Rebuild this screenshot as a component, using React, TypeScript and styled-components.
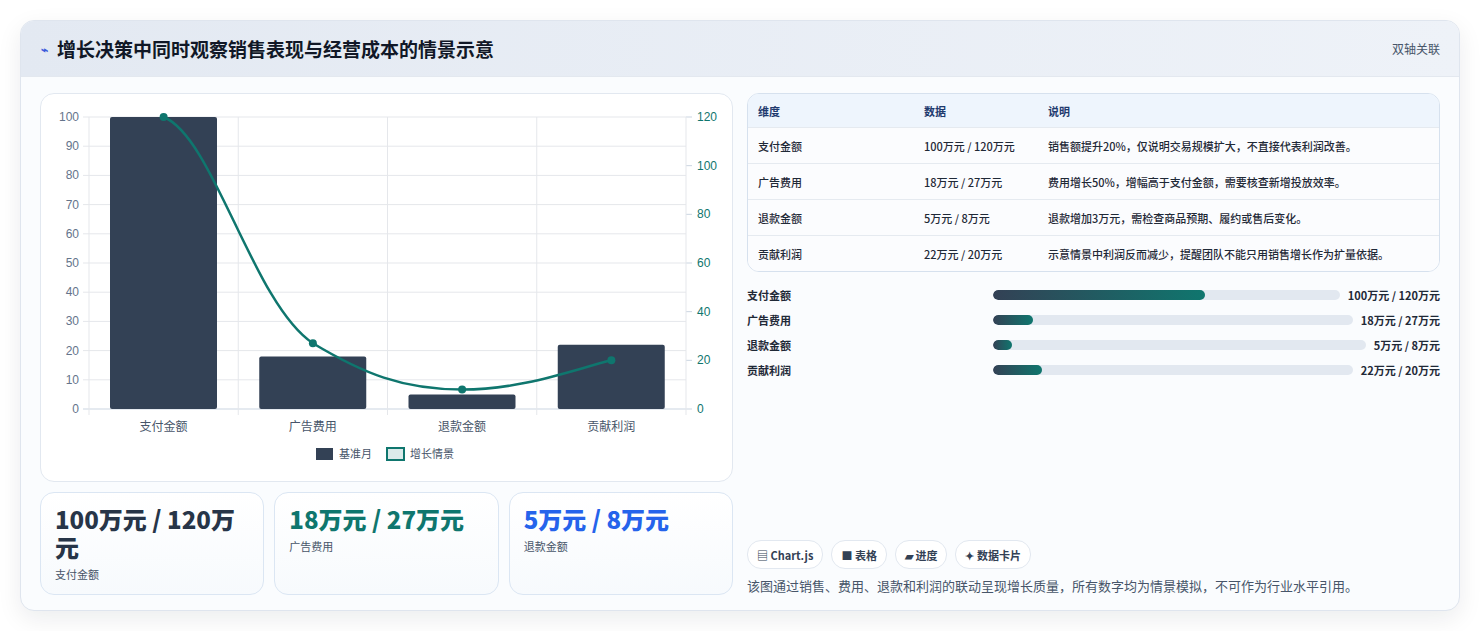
import React from "react";
import styled, { createGlobalStyle } from "styled-components";

const Global = createGlobalStyle`
  body { margin: 0; background: #ffffff; font-family: "Noto Sans CJK SC", "Noto Sans", sans-serif; }
`;
const Page = styled.div`padding: 20px 20px 20px 20px; width: 1480px; box-sizing: border-box;`;
const Card = styled.div`
  width: 1440px; height: 591px; box-sizing: border-box; border: 1px solid #dfe5ee; border-radius: 14px;
  background: #fafcfe; box-shadow: 0 8px 24px rgba(15,23,42,0.08); overflow: hidden; display: flex; flex-direction: column;
`;
const Header = styled.div`
  height: 55px; flex: none; display: flex; align-items: center; justify-content: space-between; padding: 0 19px 0 20px;
  background: linear-gradient(90deg, #e3e9f2, #eef2f8); border-bottom: 1px solid #e3e8ef;
`;
const Title = styled.h1`margin: 0; font-size: 19px; font-weight: 700; color: #111827; display: flex; align-items: center; gap: 9px;`;
const Tag = styled.span`font-size: 12px; color: #475569;`;
const Body = styled.div`flex: 1; display: grid; grid-template-columns: 693px 693px; gap: 14px; padding: 16px 19px 18px 19px;`;
const Col = styled.div`display: flex; flex-direction: column; gap: 10px; min-height: 0;`;
const ChartBox = styled.div`height: 389px; box-sizing: border-box; border: 1px solid #e2e8f0; border-radius: 14px; background: #fff;`;
const Kpis = styled.div`display: grid; grid-template-columns: repeat(3, 1fr); gap: 10px; flex: 1;`;
const Kpi = styled.div`border: 1px solid #dbe6f3; border-radius: 14px; background: linear-gradient(180deg,#fff,#f7fafd); padding: 12px 14px;`;
const KpiValue = styled.div<{ $c: string }>`font-size: 24px; font-weight: 800; line-height: 28px; color: ${p => p.$c};`;
const KpiLabel = styled.div`font-size: 11px; color: #475569; margin-top: 5px;`;
const Table = styled.div`border: 1px solid #d6e1ee; border-radius: 12px; overflow: hidden; background: #fff; font-size: 11px; color: #1f2937;`;
const Row = styled.div<{ $head?: boolean }>`
  display: grid; grid-template-columns: 166px 124px 1fr; height: ${p => p.$head ? 33 : 35}px; align-items: center; padding-left: 10px;
  background: ${p => p.$head ? "#eef5fd" : "#fbfcfe"}; border-bottom: 1px solid #e5eaf0; font-weight: ${p => p.$head ? 700 : 500};
  color: ${p => p.$head ? "#1e3a6e" : "#1f2937"}; &:last-child { border-bottom: none; }
`;
const Bars = styled.div`display: flex; flex-direction: column; gap: 8px; margin-top: 4px;`;
const BarRow = styled.div`display: flex; align-items: center; height: 17px; font-size: 11px; font-weight: 600; color: #1f2937;`;
const BarLabel = styled.div`width: 246px; flex: none;`;
const Track = styled.div`flex: 1; height: 10px; border-radius: 5px; background: #e2e8f0; overflow: hidden;`;
const Fill = styled.div`height: 100%; border-radius: 5px; background: linear-gradient(90deg,#334155,#0f766e);`;
const BarVal = styled.div`margin-left: 8px; font-weight: 700;`;
const Spacer = styled.div`flex: 1;`;
const Chips = styled.div`display: flex; gap: 8px;`;
const Chip = styled.div`height: 27px; padding: 0 9px; border: 1px solid #e2e8f0; border-radius: 14px; background: #fff; display: flex; align-items: center; gap: 4px; font-size: 11px; font-weight: 600; color: #334155;`;
const Note = styled.div`font-size: 13px; color: #475569; margin-top: 7px;`;

const cats = ["支付金额", "广告费用", "退款金额", "贡献利润"];
const base = [100, 18, 5, 22];
const grow = [120, 27, 8, 20];

function Chart() {
  const x0 = 48, x1 = 645, y0 = 23, y1 = 315, w = (x1 - x0) / 4;
  const yl = (v: number) => y1 - (v / 100) * (y1 - y0);
  const yr = (v: number) => y1 - (v / 120) * (y1 - y0);
  const pts = grow.map((v, i) => [x0 + w * (i + 0.5), yr(v)]);
  const d = `M${pts[0][0]},${pts[0][1]} C${pts[0][0] + 50},${pts[0][1] + 20} ${pts[1][0] - 60},${pts[1][1] - 40} ${pts[1][0]},${pts[1][1]} C${pts[1][0] + 50},${pts[1][1] + 30} ${pts[2][0] - 60},${pts[2][1]} ${pts[2][0]},${pts[2][1]} C${pts[2][0] + 60},${pts[2][1]} ${pts[3][0] - 40},${pts[3][1] + 10} ${pts[3][0]},${pts[3][1]}`;
  const lf = { fontFamily: "Liberation Sans, sans-serif", fontSize: 12 };
  return (
    <svg width="691" height="387">
      {Array.from({ length: 11 }, (_, i) => (
        <g key={i}>
          <line x1={x0 - 6} x2={x1} y1={yl(i * 10)} y2={yl(i * 10)} stroke={i === 0 ? "#cbd5e1" : "#e5e7eb"} />
          <text x={x0 - 10} y={yl(i * 10) + 4} textAnchor="end" fill="#64748b" {...lf}>{i * 10}</text>
        </g>
      ))}
      {Array.from({ length: 7 }, (_, i) => (
        <g key={i}>
          <line x1={x1} x2={x1 + 6} y1={yr(i * 20)} y2={yr(i * 20)} stroke="#cbd5e1" />
          <text x={x1 + 11} y={yr(i * 20) + 4} fill="#0f766e" {...lf}>{i * 20}</text>
        </g>
      ))}
      {[0, 1, 2, 3, 4].map(i => <line key={i} x1={x0 + w * i} x2={x0 + w * i} y1={y0} y2={y1 + 6} stroke="#e5e7eb" />)}
      {base.map((v, i) => (
        <rect key={i} x={x0 + w * i + 21} y={yl(v)} width={107} height={y1 - yl(v)} rx={2} fill="#334155" />
      ))}
      {cats.map((c, i) => <text key={c} x={x0 + w * (i + 0.5)} y={337} textAnchor="middle" fontSize={12} fill="#475569">{c}</text>)}
      <path d={d} fill="none" stroke="#0f766e" strokeWidth={2.5} />
      {pts.map((p, i) => <circle key={i} cx={p[0]} cy={p[1]} r={4} fill="#0f766e" />)}
      <rect x={275} y={354} width={17} height={12} fill="#334155" />
      <text x={298} y={364} fontSize={11} fill="#475569">基准月</text>
      <rect x={346} y={354} width={17} height={12} fill="#dbeaea" stroke="#0f766e" strokeWidth={2} />
      <text x={369} y={364} fontSize={11} fill="#475569">增长情景</text>
    </svg>
  );
}

const rows = [
  ["支付金额", "100万元 / 120万元", "销售额提升20%，仅说明交易规模扩大，不直接代表利润改善。"],
  ["广告费用", "18万元 / 27万元", "费用增长50%，增幅高于支付金额，需要核查新增投放效率。"],
  ["退款金额", "5万元 / 8万元", "退款增加3万元，需检查商品预期、履约或售后变化。"],
  ["贡献利润", "22万元 / 20万元", "示意情景中利润反而减少，提醒团队不能只用销售增长作为扩量依据。"],
];
const fills = [61, 11, 5, 13.5];

export default function App() {
  return (
    <Page>
      <Global />
      <Card>
        <Header>
          <Title><span style={{ color: "#3b5bdb", fontSize: 12 }}>⌁</span>增长决策中同时观察销售表现与经营成本的情景示意</Title>
          <Tag>双轴关联</Tag>
        </Header>
        <Body>
          <Col>
            <ChartBox><Chart /></ChartBox>
            <Kpis>
              <Kpi><KpiValue $c="#273548">100万元 / 120万元</KpiValue><KpiLabel>支付金额</KpiLabel></Kpi>
              <Kpi><KpiValue $c="#0f766e">18万元 / 27万元</KpiValue><KpiLabel>广告费用</KpiLabel></Kpi>
              <Kpi><KpiValue $c="#2563eb">5万元 / 8万元</KpiValue><KpiLabel>退款金额</KpiLabel></Kpi>
            </Kpis>
          </Col>
          <Col>
            <Table>
              <Row $head><span>维度</span><span>数据</span><span>说明</span></Row>
              {rows.map(r => <Row key={r[0]}><span>{r[0]}</span><span>{r[1]}</span><span>{r[2]}</span></Row>)}
            </Table>
            <Bars>
              {rows.map((r, i) => (
                <BarRow key={r[0]}>
                  <BarLabel>{r[0]}</BarLabel>
                  <Track><Fill style={{ width: `${fills[i]}%` }} /></Track>
                  <BarVal>{r[1]}</BarVal>
                </BarRow>
              ))}
            </Bars>
            <Spacer />
            <div>
              <Chips>
                <Chip>▤ Chart.js</Chip>
                <Chip>■ 表格</Chip>
                <Chip>▰ 进度</Chip>
                <Chip>✦ 数据卡片</Chip>
              </Chips>
              <Note>该图通过销售、费用、退款和利润的联动呈现增长质量，所有数字均为情景模拟，不可作为行业水平引用。</Note>
            </div>
          </Col>
        </Body>
      </Card>
    </Page>
  );
}
